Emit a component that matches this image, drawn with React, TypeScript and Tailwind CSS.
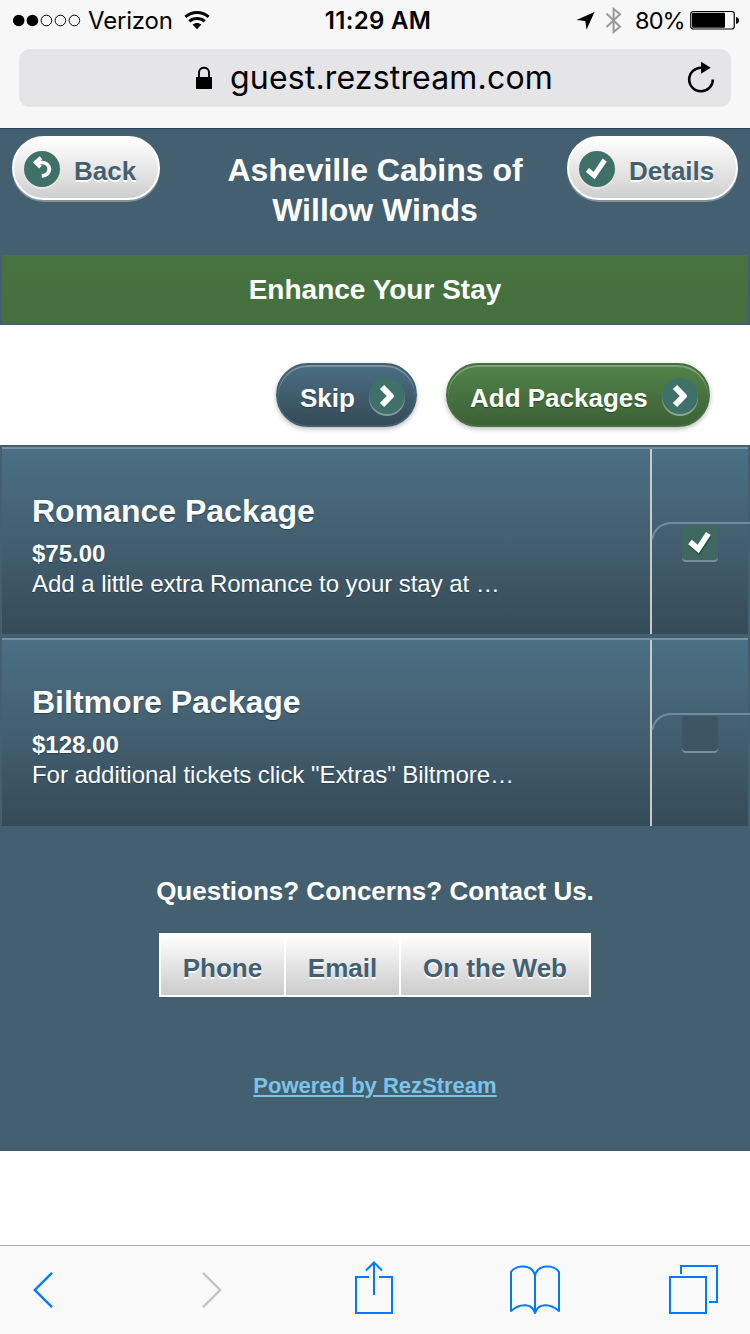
import React from "react";

const ARIAL = "font-['Liberation_Sans',Arial,sans-serif]";

function StatusBar() {
  return (
    <div className="flex h-10 items-center font-['Inter',sans-serif] text-black">
      <div className="flex w-[250px] items-center pl-[13px]">
        <svg className="block shrink-0" width="68" height="14" viewBox="0 0 68 14">
          <circle cx="5.7" cy="7.5" r="5.8" />
          <circle cx="19.4" cy="7.5" r="5.8" />
          <g fill="none" stroke="#000" strokeWidth="1">
            <circle cx="33.4" cy="7.5" r="5.3" />
            <circle cx="47.4" cy="7.5" r="5.3" />
            <circle cx="61.4" cy="7.5" r="5.3" />
          </g>
        </svg>
        <span className="ml-[7px] w-[84px] whitespace-nowrap pt-[2px] text-[24px] leading-10 tracking-[-0.2px]">Verizon</span>
        <svg className="ml-[12px] block shrink-0" width="26" height="20" viewBox="0 0 26 20">
          <g fill="none" stroke="#000" strokeWidth="3">
            <path d="M1.4 6.9C8 .9 18 .9 24.600 6.900" />
            <path d="M5.300 11.300C9.700 7.500 16.300 7.500 20.700 11.300" />
          </g>
          <path d="M8.600 14.600C11.200 12.400 14.800 12.400 17.400 14.600L13 19.200Z" />
        </svg>
      </div>
      <div className="w-[256px] whitespace-nowrap pt-[2px] text-center text-[24px] font-semibold leading-10 tracking-[0.3px]">11:29 AM</div>
      <div className="flex grow items-center pl-[70px]">
        <svg className="block shrink-0" width="20" height="20" viewBox="0 0 20 20">
          <path d="M18.500 2L.5 10L9.300 11L10.500 19.800Z" />
        </svg>
        <svg className="ml-[9px] block shrink-0" width="18" height="28" viewBox="0 0 18 28">
          <path d="M1.500 7.500L15 20.700L8.600 26V3L15 8.300L1.500 21" fill="none" stroke="#999" strokeWidth="2" />
        </svg>
        <span className="ml-[12px] w-[50px] whitespace-nowrap pt-[2px] text-[23.5px] leading-10 tracking-[-0.9px]">80%</span>
        <svg className="ml-[5px] block shrink-0" width="50" height="20" viewBox="0 0 50 20">
          <rect x=".75" y="1.5" width="43.500" height="17.500" rx="2.500" fill="none" stroke="#000" strokeWidth="1.200" />
          <rect x="2" y="2.700" width="33" height="15" rx="1" />
          <path d="M46 7C50 7.500 50 13.500 46 14Z" />
        </svg>
      </div>
    </div>
  );
}

function AddressBar() {
  return (
    <div className="mx-[19px] mt-[9px] flex h-[58px] items-center rounded-[11px] bg-[#e5e5e7] pl-[176px] pr-[15px]">
      <svg className="block shrink-0" width="18" height="24" viewBox="0 0 18 24">
        <path d="M4 12V6.500C4 .2 14 .2 14 6.500V12" fill="none" stroke="#000" strokeWidth="2" />
        <rect x="1" y="11" width="16" height="12" rx=".6" />
      </svg>
      <span className="ml-[17px] whitespace-nowrap font-['Inter',sans-serif] text-[32px] leading-[58px] tracking-[0.17px] text-black">guest.rezstream.com</span>
      <svg className="ml-auto block shrink-0" width="30" height="34" viewBox="0 0 30 34">
        <path d="M15.500 6.700A11.800 11.800 0 1 0 26.800 18.500" fill="none" stroke="#000" strokeWidth="2.600" />
        <path d="M15 .8V12.800L24.700 6.700Z" />
      </svg>
    </div>
  );
}

function Glyph({ kind }: { kind: "back" | "check" | "next" }) {
  return (
    <svg className="block shrink-0" width="36" height="39" viewBox="0 0 36 39">
      <circle cx="18" cy="20" r="18" fill="#fff" opacity=".4" />
      <circle cx="18" cy="18" r="18" fill="#3f7168" />
      {kind === "back" && (
        <g fill="none" stroke="#fff" strokeWidth="3.800">
          <path d="M13 11.300H17C27.800 11.300 28 24.800 17.800 24.800" />
          <path d="M17 6.800L11.600 11.300L16.500 16.200" />
        </g>
      )}
      {kind === "check" && <path d="M8.400 18.800L15.200 24.600L25.700 9" fill="none" stroke="#fff" strokeWidth="5" />}
      {kind === "next" && <path d="M13 9L21.800 18L13 27" fill="none" stroke="#fff" strokeWidth="6" strokeLinejoin="round" />}
    </svg>
  );
}

function Header() {
  return (
    <header className="flex h-[127px] items-start border-t border-[#294255] bg-[#435f70] px-3 pt-[7px]">
      <button className="flex h-16 w-[148px] items-center rounded-[32px] border-2 border-white bg-linear-to-b from-white to-[#cfcfcf] pl-[10px] pt-[5px] shadow-[0_2px_0_#819097]">
        <Glyph kind="back" />
        <span className="ml-[14px] whitespace-nowrap text-[26px] font-bold leading-8 text-[#435f70] [text-shadow:0_2px_0_#fff]">Back</span>
      </button>
      <h1 className="grow pl-[23px] pt-[14px] text-center text-[32px] font-bold leading-10 text-white">
        Asheville Cabins of<br />Willow Winds
      </h1>
      <button className="flex h-16 w-[171px] items-center rounded-[32px] border-2 border-white bg-linear-to-b from-white to-[#cfcfcf] pl-[10px] pt-[5px] shadow-[0_2px_0_#819097]">
        <Glyph kind="check" />
        <span className="ml-[14px] whitespace-nowrap text-[26px] font-bold leading-8 text-[#435f70] [text-shadow:0_2px_0_#fff]">Details</span>
      </button>
    </header>
  );
}

function Row({ name, price, text, checked }: { name: string; price: string; text: string; checked: boolean }) {
  return (
    <div className="flex h-full border-t-2 border-[#7691a1] bg-linear-to-b from-[#4b6f84] via-[#435f70] to-[#354b58]">
      <div className="w-[648px] pl-[30px] pt-[42px] text-white [text-shadow:0_1px_1px_#253f50]">
        <h2 className="whitespace-nowrap text-[32px] font-bold leading-10">{name}</h2>
        <p className="mt-[8px] text-[24px] font-bold leading-[30px]">{price}</p>
        <p className="whitespace-nowrap text-[24px] leading-[30px] tracking-[-0.04px]">{text}</p>
      </div>
      <div className="w-[98px] border-l-2 border-[#cacacd]">
        <svg className="block overflow-visible" width="98" height="185" viewBox="0 0 98 185">
          <path d="M.5 90C2 79 11 74 20 74H98" fill="none" stroke="#728b9a" strokeWidth="2" />
          <rect x="30" y="78" width="36" height="35" rx="4" fill="#78909b" />
          {checked ? (
            <rect x="30" y="76" width="36" height="35" rx="4" fill="#3e6860" />
          ) : (
            <rect x="30" y="76" width="36" height="35" rx="4" fill="#3d5564" />
          )}
          {checked && (
            <g fill="none" strokeWidth="5.600">
              <path d="M38.500 95L46.800 102L57 86.500" stroke="#193b35" opacity=".6" />
              <path d="M38 93L46.200 100L56.400 84.500" stroke="#fff" />
            </g>
          )}
        </svg>
      </div>
    </div>
  );
}

function Toolbar() {
  return (
    <nav className="flex h-[89px] items-start border-t border-[#b2b2b2] bg-[#f9f9f9]">
      <svg className="block" width="750" height="88" viewBox="0 1246 750 88" fill="none" stroke="#007aff" strokeWidth="2">
        <path d="M52 1272.800L34.800 1290L52 1307.200" strokeWidth="2.400" />
        <path d="M203 1272.800L220.200 1290L203 1307.200" stroke="#c5c5c7" strokeWidth="2.400" />
        <path d="M369 1277H356V1313H392V1277H379M374 1295V1263M366 1270.500L374 1262.500L382 1270.500" />
        <path d="M535 1313V1276C533 1264 516 1264 511 1272V1311C520 1303 532 1303 535 1313C538 1303 550 1303 559 1311V1272C554 1264 537 1264 535 1276" strokeLinejoin="round" />
        <path d="M670 1277H706V1313H670ZM681 1274V1266H717V1302H709" />
      </svg>
    </nav>
  );
}

const CONTACT = "flex h-16 items-center justify-center border-y-2 border-r-2 border-white bg-linear-to-b from-white to-[#cbcbcb] pt-[6px] text-[26px] font-bold leading-8 [text-shadow:0_2px_0_#fff] whitespace-nowrap";

export default function App() {
  return (
    <div className={`flex h-[1334px] w-[750px] flex-col overflow-hidden bg-white ${ARIAL}`}>
      <div className="h-32 shrink-0 bg-[#f7f7f7]">
        <StatusBar />
        <AddressBar />
      </div>
      <Header />
      <div className="h-[70px] border-x-2 border-b-2 border-[#435f70] bg-linear-to-b from-[#477340] to-[#446f3e] text-center text-[28px] font-bold leading-[69px] text-white">
        Enhance Your Stay
      </div>
      <div className="flex h-[120px] items-start justify-end gap-[29px] pr-10 pt-[38px]">
        <button className="flex h-16 w-[141px] items-center justify-between rounded-[32px] border-2 border-[#435f70] bg-linear-to-b from-[#4b6f84] to-[#354b58] pl-[22px] pr-[10px] pt-[5px] shadow-[inset_0_2px_0_#7993a1,0_2px_5px_#bbb]">
          <span className="whitespace-nowrap pt-px text-[26px] font-bold leading-8 text-white [text-shadow:0_1px_1px_#253f50]">Skip</span>
          <Glyph kind="next" />
        </button>
        <button className="flex h-16 w-[264px] items-center justify-between rounded-[32px] border-2 border-[#477141] bg-linear-to-b from-[#518449] to-[#3d6137] pl-[22px] pr-[10px] pt-[5px] shadow-[inset_0_2px_0_#80a47a,0_2px_5px_#bbb]">
          <span className="whitespace-nowrap pt-px text-[26px] font-bold leading-8 text-white [text-shadow:0_1px_1px_#23451d]">Add Packages</span>
          <Glyph kind="next" />
        </button>
      </div>
      <main className="flex h-[706px] flex-col bg-[#435f70] px-[2px] pt-[2px]">
        <div className="h-[187px]">
          <Row name="Romance Package" price="$75.00" text="Add a little extra Romance to your stay at …" checked />
        </div>
        <div className="mt-1 h-[188px]">
          <Row name="Biltmore Package" price="$128.00" text={'For additional tickets click "Extras" Biltmore…'} checked={false} />
        </div>
        <p className="mt-[49px] text-center text-[26px] font-bold leading-8 text-white">Questions? Concerns? Contact Us.</p>
        <div className="mt-[26px] flex justify-center text-[#435f70]">
          <div className={`${CONTACT} w-[127px] border-l-2`}>Phone</div>
          <div className={`${CONTACT} w-[115px]`}>Email</div>
          <div className={`${CONTACT} w-[190px]`}>On the Web</div>
        </div>
        <p className="mt-[74px] text-center text-[22px] font-bold leading-[30px] text-[#7cc4e7] underline">Powered by RezStream</p>
      </main>
      <div className="h-[94px]" />
      <Toolbar />
    </div>
  );
}
